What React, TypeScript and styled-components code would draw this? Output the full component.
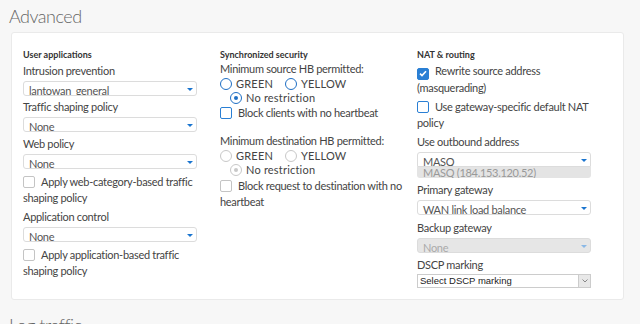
import React from "react";
import styled, { createGlobalStyle } from "styled-components";

const GlobalStyle = createGlobalStyle`
  html, body {
    margin: 0;
    padding: 0;
    background: #f7f7f7;
    font-family: Lato, "Liberation Sans", sans-serif;
    color: #444;
  }
`;

const Page = styled.div`
  width: 640px;
  height: 324px;
  overflow: hidden;
  padding: 4px 16px 0 11px;
  box-sizing: border-box;
`;

const Title = styled.h2`
  margin: 0 0 0 -2px;
  height: 28px;
  font-size: 18px;
  font-weight: 300;
  letter-spacing: -0.5px;
  color: #666;
  line-height: 24px;
`;

const Panel = styled.div`
  background: #fff;
  border: 1px solid #eaeaea;
  border-radius: 3px;
  height: 268px;
  box-sizing: border-box;
  padding: 15px 0 0 11px;
  display: grid;
  grid-template-columns: 197px 197px 190px;
  margin-bottom: 13px;
`;

const Column = styled.div<{ $width: number }>`
  display: flex;
  flex-direction: column;
  width: ${(p) => p.$width}px;
  letter-spacing: -0.3px;
`;

const Heading = styled.div`
  font-size: 9px;
  font-weight: 700;
  color: #333;
  line-height: 13px;
  letter-spacing: 0;
`;

const Label = styled.div<{ $top?: number }>`
  font-size: 11px;
  line-height: 16px;
  margin-top: ${(p) => p.$top ?? 0}px;
  color: #444;
`;

const SelectBox = styled.div<{ $disabled?: boolean; $flush?: boolean }>`
  position: relative;
  width: 174px;
  height: 15px;
  box-sizing: border-box;
  border: 1px solid #dcdcdc;
  border-radius: ${(p) => (p.$flush ? "3px 3px 0 0" : "3px")};
  background: ${(p) => (p.$disabled ? "#e6e6e6" : "#fff")};
  color: ${(p) => (p.$disabled ? "#aaa" : "#555")};
  font-size: 11px;
  line-height: 11px;
  padding: 3px 0 0 5px;
  overflow: hidden;
  white-space: nowrap;
  margin-top: 2px;
  margin-bottom: ${(p) => (p.$flush ? 0 : 3)}px;
`;

const Caret = styled.span<{ $disabled?: boolean }>`
  position: absolute;
  right: 3px;
  top: 6px;
  width: 0;
  height: 0;
  border-left: 3px solid transparent;
  border-right: 3px solid transparent;
  border-top: 3px solid ${(p) => (p.$disabled ? "#8ab8e6" : "#1a75cf")};
`;

const Hint = styled.div`
  width: 174px;
  height: 11px;
  box-sizing: border-box;
  background: #e4e4e4;
  border-radius: 0 0 3px 3px;
  color: #999;
  font-size: 11px;
  line-height: 11px;
  padding-left: 6px;
  overflow: hidden;
  margin-bottom: 4px;
`;

const NativeSelect = styled.div`
  width: 174px;
  height: 14px;
  box-sizing: border-box;
  border: 1px solid #ccc;
  display: flex;
  align-items: center;
  font-size: 9.5px;
  letter-spacing: 0;
  color: #222;
  margin-top: 1px;
  padding-left: 2px;
  justify-content: space-between;
  font-family: "Liberation Sans", sans-serif;
`;

const NativeArrow = styled.span`
  width: 11px;
  height: 12px;
  background: #e8e8e8;
  border-left: 1px solid #ccc;
  display: flex;
  align-items: center;
  justify-content: center;
`;

const CheckRow = styled.div<{ $top?: number }>`
  font-size: 11px;
  line-height: 16px;
  margin-top: ${(p) => p.$top ?? 0}px;
  color: #444;
`;

const Box = styled.span<{ $tone: "blue" | "gray"; $checked?: boolean }>`
  display: inline-flex;
  align-items: center;
  justify-content: center;
  width: 12px;
  height: 12px;
  box-sizing: border-box;
  vertical-align: -2px;
  margin-right: 6px;
  border-radius: 2px;
  border: 1.3px solid ${(p) => (p.$tone === "blue" ? "#2a7fd4" : "#c4c4c4")};
  background: ${(p) => (p.$checked ? "#2a7fd4" : "#fff")};
`;

const RadioLine = styled.div<{ $indent?: number }>`
  display: flex;
  align-items: center;
  font-size: 11px;
  line-height: 14px;
  padding-left: ${(p) => p.$indent ?? 0}px;
  letter-spacing: 0.2px;
`;

const RadioItem = styled.span<{ $width?: number }>`
  display: inline-flex;
  align-items: center;
  width: ${(p) => (p.$width ? `${p.$width}px` : "auto")};
`;

const Ring = styled.span<{ $tone: "blue" | "gray"; $on?: boolean }>`
  width: 12px;
  height: 12px;
  box-sizing: border-box;
  border-radius: 50%;
  border: 1.5px solid ${(p) => (p.$tone === "blue" ? "#1f6fc4" : "#c8c8c8")};
  margin-right: 4px;
  display: inline-flex;
  align-items: center;
  justify-content: center;
  &::after {
    content: "";
    display: ${(p) => (p.$on ? "block" : "none")};
    width: 4px;
    height: 4px;
    border-radius: 50%;
    background: ${(p) => (p.$tone === "blue" ? "#1f6fc4" : "#c8c8c8")};
  }
`;

const Select = ({
  value,
  disabled,
  flush,
}: {
  value: string;
  disabled?: boolean;
  flush?: boolean;
}) => (
  <SelectBox $disabled={disabled} $flush={flush}>
    {value}
    <Caret $disabled={disabled} />
  </SelectBox>
);

const Check = ({
  tone,
  checked,
  children,
  top,
}: {
  tone: "blue" | "gray";
  checked?: boolean;
  children: React.ReactNode;
  top?: number;
}) => (
  <CheckRow $top={top}>
    <Box $tone={tone} $checked={checked}>
      {checked && (
        <svg width="8" height="7" viewBox="0 0 8 7">
          <path d="M1 3.6 L3 5.6 L7 1.2" stroke="#fff" strokeWidth="1.6" fill="none" />
        </svg>
      )}
    </Box>
    {children}
  </CheckRow>
);

const HbBlock = ({ tone }: { tone: "blue" | "gray" }) => (
  <>
    <RadioLine>
      <RadioItem $width={65}>
        <Ring $tone={tone} />
        GREEN
      </RadioItem>
      <RadioItem>
        <Ring $tone={tone} />
        YELLOW
      </RadioItem>
    </RadioLine>
    <RadioLine $indent={10}>
      <RadioItem>
        <Ring $tone={tone} $on />
        No restriction
      </RadioItem>
    </RadioLine>
  </>
);

export default function App() {
  return (
    <Page>
      <GlobalStyle />
      <Title>Advanced</Title>
      <Panel>
        <Column $width={176}>
          <Heading>User applications</Heading>
          <Label $top={2}>Intrusion prevention</Label>
          <Select value="lantowan_general" />
          <Label>Traffic shaping policy</Label>
          <Select value="None" />
          <Label $top={1}>Web policy</Label>
          <Select value="None" />
          <Check tone="gray" top={2}>
            Apply web-category-based traffic shaping policy
          </Check>
          <Label $top={3}>Application control</Label>
          <Select value="None" />
          <Check tone="gray" top={2}>
            Apply application-based traffic shaping policy
          </Check>
        </Column>
        <Column $width={190}>
          <Heading>Synchronized security</Heading>
          <Label>Minimum source HB permitted:</Label>
          <HbBlock tone="blue" />
          <Check tone="blue">Block clients with no heartbeat</Check>
          <Label $top={12}>Minimum destination HB permitted:</Label>
          <HbBlock tone="gray" />
          <Check tone="gray" top={1}>
            Block request to destination with no heartbeat
          </Check>
        </Column>
        <Column $width={184}>
          <Heading>NAT &amp; routing</Heading>
          <Check tone="blue" checked top={2}>
            Rewrite source address (masquerading)
          </Check>
          <Check tone="blue" top={3}>
            Use gateway-specific default NAT policy
          </Check>
          <Label $top={3}>Use outbound address</Label>
          <Select value="MASQ" flush />
          <Hint>MASQ (184.153.120.52)</Hint>
          <Label>Primary gateway</Label>
          <Select value="WAN link load balance" />
          <Label $top={2}>Backup gateway</Label>
          <Select value="None" disabled />
          <Label $top={1}>DSCP marking</Label>
          <NativeSelect>
            Select DSCP marking
            <NativeArrow>
              <svg width="6" height="4" viewBox="0 0 6 4">
                <path d="M0.5 0.5 L3 3 L5.5 0.5" stroke="#888" fill="none" />
              </svg>
            </NativeArrow>
          </NativeSelect>
        </Column>
      </Panel>
      <Title>Log traffic</Title>
    </Page>
  );
}
